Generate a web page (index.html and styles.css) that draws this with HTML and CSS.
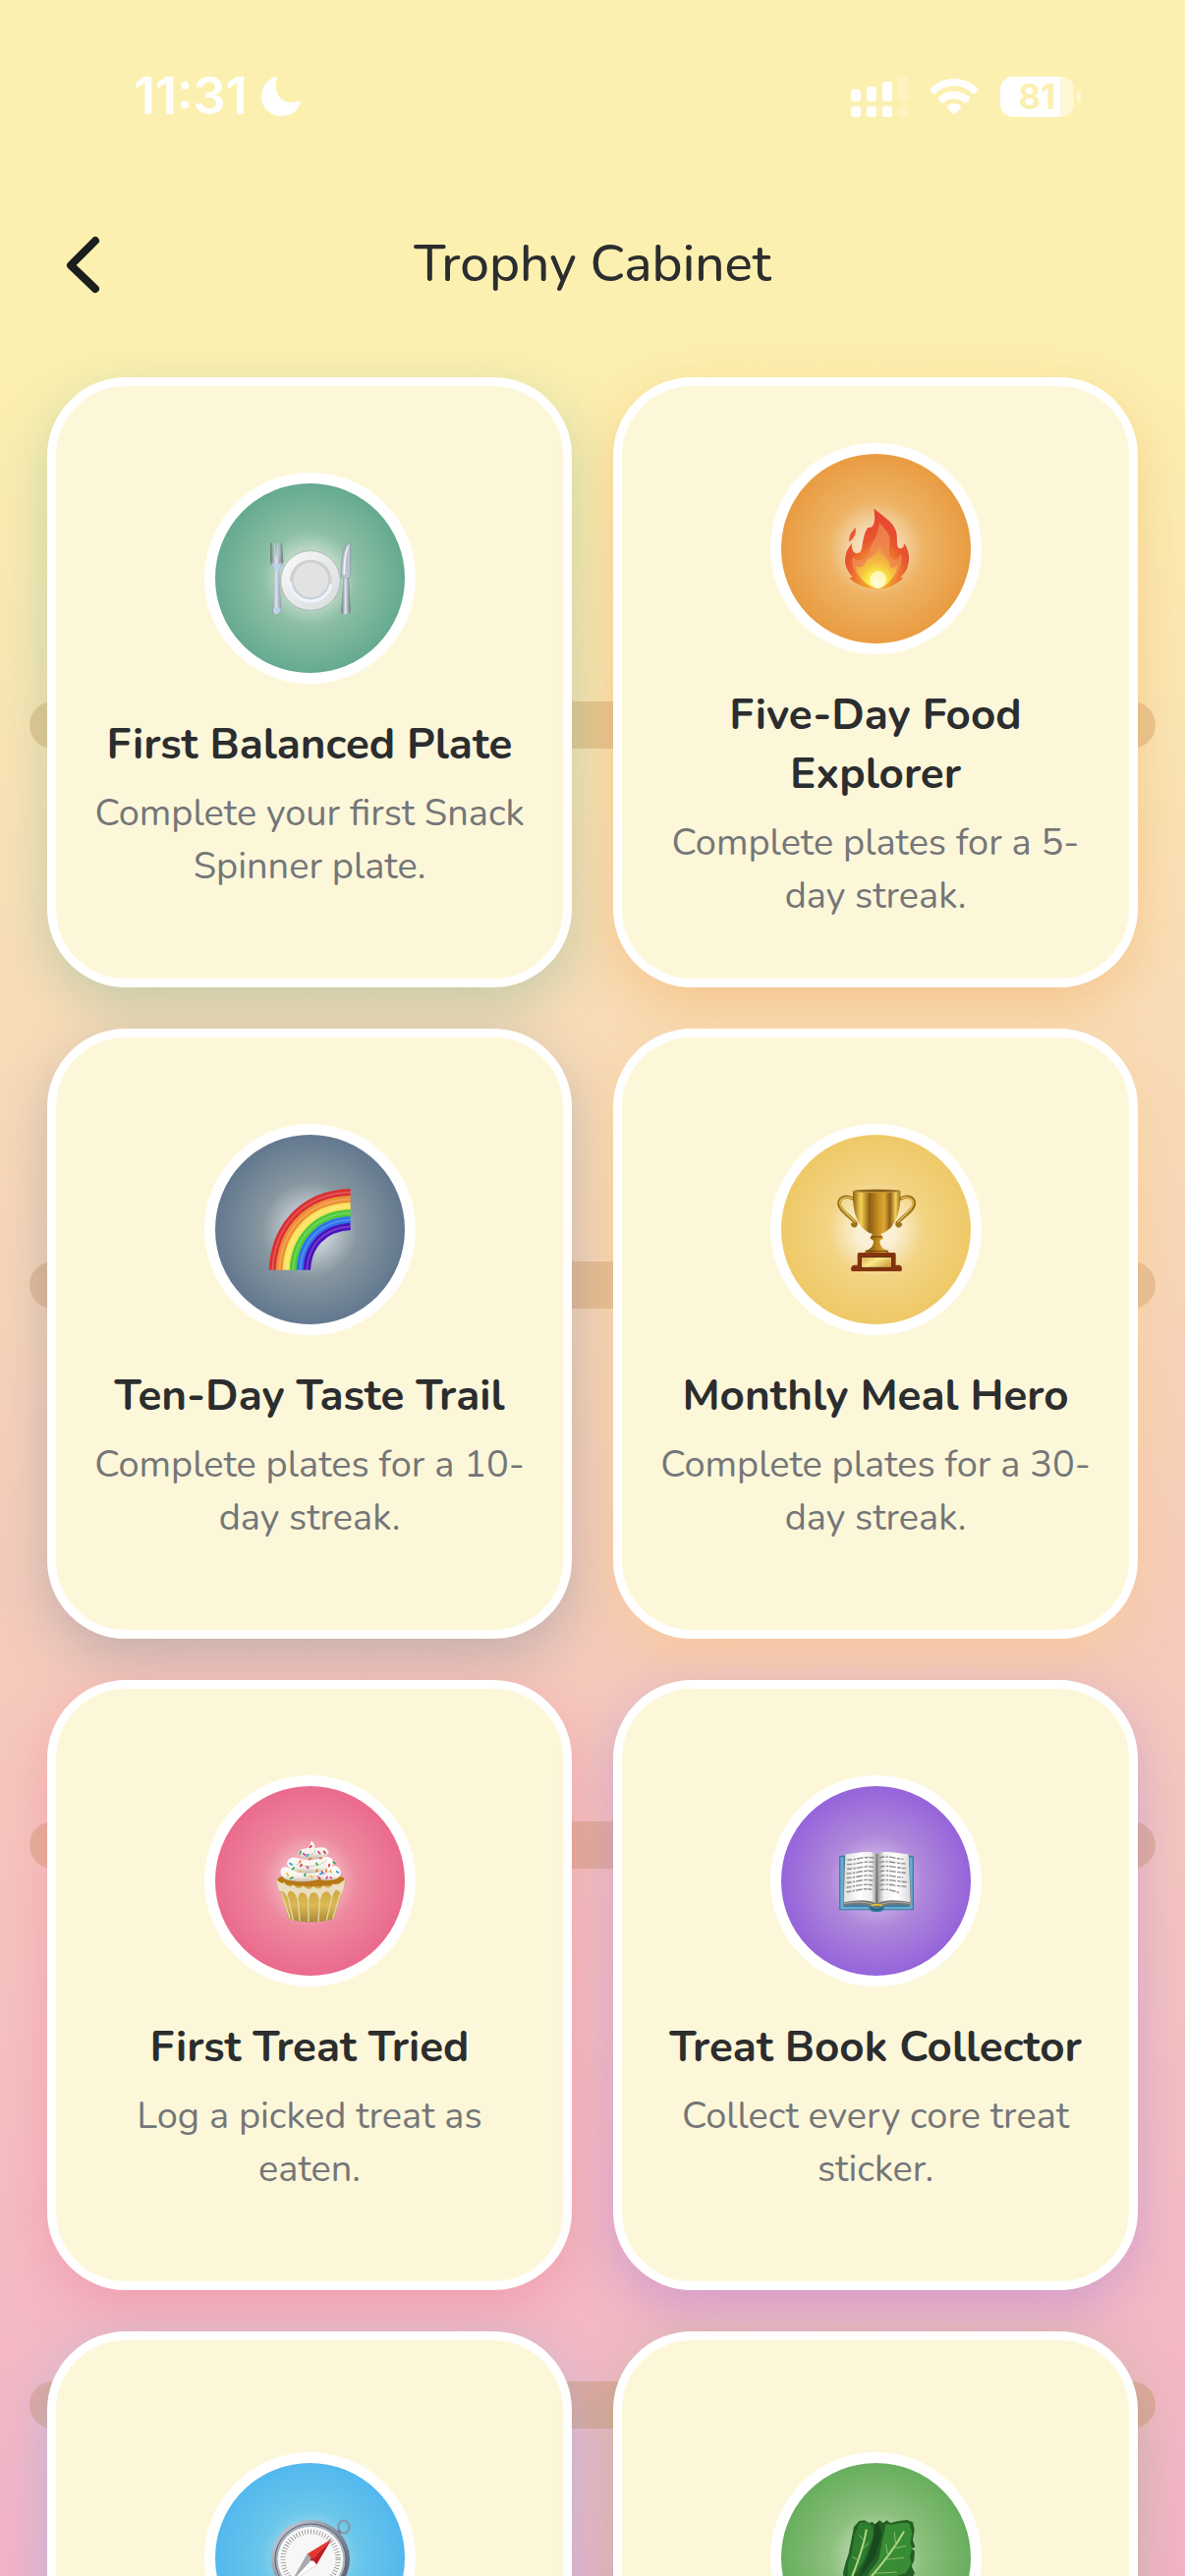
FILE: index.html
```html
<!DOCTYPE html>
<html lang="en">
<head>
  <meta charset="UTF-8">
  <meta name="viewport" content="width=device-width, initial-scale=1.0">
  <title>Trophy Cabinet</title>
  <link rel="stylesheet" href="styles.css">
</head>
<body>
  <div class="screen">
    <div class="shelves" aria-hidden="true">
      <span class="shelf"></span>
      <span class="shelf"></span>
      <span class="shelf"></span>
      <span class="shelf"></span>
    </div>

    <div class="status">
      <div class="status_left">
        <span class="time">11:31</span>
        <svg class="moon" viewBox="0 0 120 120"><path fill="#fff" d="M41 1C45-1 49 3 47 7C40 34 46 56 62 69C76 80 94 82 111 76C117 74 121 77 119 82C111 105 89 120 62 120C27 120 0 94 0 60C0 33 16 11 41 1Z"/></svg>
      </div>
      <div class="status_right">
        <svg class="signal" viewBox="0 0 58 41" fill="#fff">
          <rect x="0" y="13" width="10" height="12" rx="3"/>
          <rect x="16" y="10" width="10" height="15" rx="3"/>
          <rect x="32" y="5" width="10" height="20" rx="3"/>
          <rect x="48" y="0" width="10" height="25" rx="3" opacity=".2"/>
          <rect x="0" y="30" width="10" height="11" rx="3"/>
          <rect x="16" y="30" width="10" height="11" rx="3"/>
          <rect x="32" y="30" width="10" height="11" rx="3"/>
          <rect x="48" y="30" width="10" height="11" rx="3" opacity=".2"/>
        </svg>
        <svg class="wifi" viewBox="0 0 150 112" fill="#fff">
          <path d="M2 31C42-10 108-10 148 31Q151 34 148 37L138 47Q135 49 132 46C100 15 50 15 18 46Q15 49 12 47L2 37Q-1 34 2 31Z"/>
          <path d="M28 57C55 32 95 32 122 57Q126 61 122 64L113 74Q109 77 106 74C88 58 62 58 44 74Q41 77 37 74L28 64Q24 61 28 57Z"/>
          <path d="M54 84C66 74 84 74 96 84Q99 87 96 90L78 109Q75 112 72 109L54 90Q51 87 54 84Z"/>
        </svg>
        <div class="battery"><span class="battery_level">81</span></div>
      </div>
    </div>

    <header class="header">
      <button class="back" type="button" aria-label="Back">
        <svg viewBox="0 0 40 60"><path d="M33 6L8 31L33 55" fill="none" stroke="#1c1e1d" stroke-width="8" stroke-linecap="round" stroke-linejoin="round"/></svg>
      </button>
      <h1 class="header_title">Trophy Cabinet</h1>
    </header>

    <main class="trophies">
      <article class="card green">
        <div class="medal">
          <svg viewBox="0 0 252 252">
            <defs>
              <linearGradient id="steel" x1="0" x2="1"><stop offset="0" stop-color="#66716f"/><stop offset=".45" stop-color="#dce5f2"/><stop offset="1" stop-color="#6b7478"/></linearGradient>
              <linearGradient id="dish" x2="1" y2="1"><stop offset="0" stop-color="#fafafa"/><stop offset="1" stop-color="#d8dadb"/></linearGradient>
            </defs>
            <path fill="url(#steel)" d="M7 20L12 20L14 62L17 62L17 20L21 20L23 62L26 62L28 20L32 20L34 62L37 62L37 20L42 20L46 75C46 85 37 90 33 98L40 228Q40 236 33 236H18Q11 236 12 228L21 98C17 90 6 87 6 76Z"/>
            <path fill="#bcd2f5" d="M9 78C17 88 36 88 43 78L31 104H22ZM15 220H38V231H15Z"/>
            <circle cx="129" cy="135" r="91" fill="url(#dish)" stroke="#9aa5a1" stroke-width="2"/>
            <circle cx="130" cy="135" r="64" fill="#cdd0d3"/>
            <path d="M67 139A63 63 0 0 0 192 145" fill="none" stroke="#edf4ff" stroke-width="9"/>
            <circle cx="130" cy="133" r="53" fill="#e2e2e2"/>
            <path fill="#bac4d0" stroke="#7c8e91" stroke-width="2" d="M251 20V122Q250 129 242 129H231Q223 127 223 117C222 78 229 18 251 20Z"/>
            <path fill="#f2f5fa" d="M248 24C234 36 230 76 229 116H235C234 80 239 42 248 24Z"/>
            <path fill="url(#steel)" d="M229 128H246L251 226Q251 237 242 237H231Q223 236 223 227Z"/>
          </svg>
        </div>
        <h2 class="card_title">First Balanced Plate</h2>
        <p class="card_text">Complete your first Snack Spinner plate.</p>
      </article>

      <article class="card orange">
        <div class="medal">
          <svg viewBox="0 0 252 252">
            <defs>
              <radialGradient id="flame" cx=".5" cy=".85" r=".8"><stop offset="0" stop-color="#fdd835"/><stop offset=".3" stop-color="#f0922e"/><stop offset=".6" stop-color="#e8552e"/><stop offset="1" stop-color="#e5452f"/></radialGradient>
              <radialGradient id="ember" cx=".5" cy=".85" r=".75"><stop offset="0" stop-color="#fffde0"/><stop offset=".25" stop-color="#fdf04a"/><stop offset=".6" stop-color="#f6bd40"/><stop offset="1" stop-color="#f09a48"/></radialGradient>
            </defs>
            <path fill="#ea5a39" d="M65 62C58 72 46 78 45 106C61 96 68 84 65 62Z"/>
            <path fill="url(#flame)" d="M122 5C150 30 182 45 190 78C194 100 188 125 200 127C210 128 214 118 214 110C226 130 232 150 226 175C222 195 212 205 203 215L211 217C190 238 160 250 134 251C100 250 66 238 46 217L56 215C40 195 28 175 35 148C38 130 48 120 54 110C52 125 56 141 70 142C84 140 84 128 86 115C90 90 94 75 103 63C112 64 120 60 122 45C126 30 121 18 122 5Z"/>
            <path fill="#f08f56" opacity=".75" d="M138 48C152 66 170 78 170 104C169 132 162 152 180 160C192 164 201 152 203 141C213 174 197 222 134 250C78 232 48 190 57 151C72 172 98 164 105 138C112 112 136 88 138 48Z"/>
            <path fill="url(#ember)" d="M139 118C140 146 172 160 170 184C178 190 190 184 194 175C192 208 164 242 134 250C98 242 66 210 66 180C76 188 92 182 96 168C112 150 136 142 139 118Z"/>
            <ellipse cx="134" cy="222" rx="25" ry="27" fill="#fffce4" opacity=".7"/>
          </svg>
        </div>
        <h2 class="card_title">Five-Day Food Explorer</h2>
        <p class="card_text">Complete plates for a 5-day streak.</p>
      </article>

      <article class="card slate">
        <div class="medal">
          <svg viewBox="0 0 252 252" fill="none">
            <g stroke-width="22">
              <path stroke="#dd2f30" d="M13 251C18 120 105 18 251 14"/>
              <path stroke="#ee8f33" d="M34 251C39 132 118 39 251 35"/>
              <path stroke="#fbe35c" d="M55 251C60 143 130 60 251 56"/>
              <path stroke="#4ecb38" d="M76 251C81 155 143 81 251 77"/>
              <path stroke="#2c74ec" d="M97 251C102 166 155 102 251 98"/>
              <path stroke="#4b12bd" d="M118 251C121 178 167 123 251 118"/>
            </g>
            <g stroke="#fff" stroke-width="5" opacity=".2">
              <path d="M13 251C18 120 105 18 251 14"/>
              <path d="M34 251C39 132 118 39 251 35"/>
              <path d="M55 251C60 143 130 60 251 56"/>
              <path d="M76 251C81 155 143 81 251 77"/>
              <path d="M97 251C102 166 155 102 251 98"/>
              <path d="M118 251C121 178 167 123 251 118"/>
            </g>
          </svg>
        </div>
        <h2 class="card_title">Ten-Day Taste Trail</h2>
        <p class="card_text">Complete plates for a 10-day streak.</p>
      </article>

      <article class="card gold">
        <div class="medal">
          <svg viewBox="0 0 252 252">
            <defs>
              <linearGradient id="cup" x2="1"><stop offset="0" stop-color="#8c6010"/><stop offset=".17" stop-color="#f7d355"/><stop offset=".35" stop-color="#8d5d14"/><stop offset=".52" stop-color="#c18a20"/><stop offset=".66" stop-color="#dda934"/><stop offset=".78" stop-color="#8d5d14"/><stop offset=".9" stop-color="#f2cf58"/><stop offset="1" stop-color="#986b14"/></linearGradient>
              <linearGradient id="plaque" x2="1" y2=".6"><stop offset="0" stop-color="#d8a84a"/><stop offset=".5" stop-color="#f9e98a"/><stop offset="1" stop-color="#d6a445"/></linearGradient>
            </defs>
            <g fill="none" stroke-linecap="round">
              <path stroke="#9e741b" stroke-width="11" d="M57 33C42 24 17 26 15 47C14 68 47 86 65 107C68 116 60 119 56 112M203 33C218 24 243 26 244 47C245 68 210 86 193 107C190 116 198 119 202 112"/>
              <path stroke="#e8c456" stroke-width="4" d="M55 32C42 26 18 29 17 47C18 66 46 84 64 104M205 32C218 26 240 29 241 47C240 66 213 84 195 104"/>
            </g>
            <path fill="url(#cup)" d="M57 10C55 88 78 128 117 141L109 154L120 162C120 176 113 188 94 192L91 202H168L165 192C147 188 139 176 139 162L150 154L142 141C181 128 204 88 202 10Z"/>
            <ellipse cx="130" cy="10" rx="74" ry="6" fill="#c09336"/>
            <ellipse cx="130" cy="9" rx="68" ry="2" fill="#704c10"/>
            <path d="M112 150H147M96 193H164" stroke="#6d430c" stroke-width="3"/>
            <path fill="#85340f" d="M76 198H184Q188 198 188 204V236H200Q207 238 207 249Q207 255 201 255H57Q51 255 51 249Q51 238 60 236H71V204Q71 198 76 198Z"/>
            <path fill="url(#plaque)" stroke="#5c210b" stroke-width="3" d="M82 211H176V244H82Z"/>
          </svg>
        </div>
        <h2 class="card_title">Monthly Meal Hero</h2>
        <p class="card_text">Complete plates for a 30-day streak.</p>
      </article>

      <article class="card pink">
        <div class="medal">
          <svg viewBox="0 0 252 252">
            <defs>
              <linearGradient id="wrap" y2="1" x2="0"><stop offset="0" stop-color="#c99c3c"/><stop offset=".6" stop-color="#dcb952"/><stop offset="1" stop-color="#a98b38"/></linearGradient>
              <linearGradient id="cream" y2="1" x2="0"><stop offset="0" stop-color="#fff"/><stop offset=".65" stop-color="#f5f2ea"/><stop offset="1" stop-color="#c5bba9"/></linearGradient>
            </defs>
            <path fill="url(#wrap)" d="M25 125L61 243Q125 264 201 243L236 125Z"/>
            <ellipse cx="131" cy="124" rx="103" ry="20" fill="#b87818"/>
            <path fill="#e9dfc0" d="M24 122C34 132 42 137 49 132C57 146 70 148 77 139C86 153 98 153 107 142C117 155 129 155 138 143C148 154 160 154 169 141C179 152 191 149 198 136C208 142 221 136 236 120L229 152L222 172C220 160 212 153 206 156C200 160 196 172 194 184C192 168 184 158 176 160C166 162 160 178 157 192C155 174 147 162 138 163C128 164 124 178 122 194C120 178 114 164 104 163C94 163 91 176 91 190C86 172 78 158 68 158C61 158 58 168 59 182C54 168 46 156 38 160L33 156Z"/>
            <path fill="none" stroke="#e3d7ac" stroke-width="4" d="M40 162L66 243M60 176L76 247M91 184L96 250M122 188L123 252M157 186L153 251M194 178L178 248M220 166L197 243"/>
            <path fill="url(#cream)" d="M40 90C50 79 70 92 95 100C140 111 168 86 205 82C224 88 223 104 219 112C211 128 174 128 155 122C116 134 76 130 56 124C40 116 34 101 40 90Z"/>
            <path fill="url(#cream)" d="M61 64C74 48 93 62 119 64C146 68 166 46 190 57C207 70 199 83 180 92C152 105 110 108 82 98C61 90 52 76 61 64Z"/>
            <path fill="url(#cream)" d="M94 38C101 25 119 34 124 22C132 20 126 10 132 7C145 15 139 22 144 28C162 22 178 24 184 38C185 52 157 64 126 60C101 57 87 48 94 38Z"/>
            <path fill="none" stroke="#cfc8bb" stroke-width="3" d="M112 47C128 51 146 44 143 31M85 76C119 90 162 82 178 64M112 112C145 118 178 108 194 92"/>
            <g stroke-width="5" stroke-linecap="round">
              <path stroke="#d82f3d" d="M127 25L132 21M170 37L174 43M99 83L102 77M153 117L158 120M185 82L187 77"/>
              <path stroke="#31a34a" d="M97 45L99 37M74 92L79 87M68 120L75 117M111 112L113 106M147 73L150 79M198 70L204 74"/>
              <path stroke="#dc3990" d="M107 44L112 48M118 84L122 88M153 38L158 44M164 99L168 104M178 121L180 115M190 117L193 119"/>
              <path stroke="#ee6c24" d="M95 72L98 66M157 59L163 58M125 62L130 59M147 99L150 94M176 99L178 94"/>
              <path stroke="#269bdf" d="M66 74L73 78M118 52L121 47M159 106L165 103M209 99L214 102"/>
              <path stroke="#eabf2c" d="M57 105L61 111M130 112L134 117M94 99L99 98M189 97L193 101"/>
            </g>
          </svg>
        </div>
        <h2 class="card_title">First Treat Tried</h2>
        <p class="card_text">Log a picked treat as eaten.</p>
      </article>

      <article class="card purple">
        <div class="medal">
          <svg viewBox="0 0 252 252">
            <defs>
              <linearGradient id="leafl" x2="1"><stop offset="0" stop-color="#dedede"/><stop offset=".5" stop-color="#fff"/><stop offset=".85" stop-color="#eee"/><stop offset="1" stop-color="#999"/></linearGradient>
              <linearGradient id="leafr" x2="1"><stop offset="0" stop-color="#999"/><stop offset=".2" stop-color="#f2f2f2"/><stop offset=".6" stop-color="#fff"/><stop offset="1" stop-color="#d8d8dc"/></linearGradient>
            </defs>
            <path fill="#397fa6" d="M15 53L20 50H238L243 53V217H151C144 225 115 225 108 217H15Z"/>
            <path fill="#68acd0" d="M19 55H29V207H106V214H19ZM229 55H239V214H151V207H229Z"/>
            <path fill="#777773" d="M33 45L27 190L30 204C60 198 103 198 119 209H140C157 198 204 198 232 204L235 190L228 45Z"/>
            <path fill="none" stroke="#c6c5be" stroke-width="2" d="M30 197C65 190 106 191 122 202M138 202C154 191 203 190 232 197"/>
            <path fill="url(#leafl)" d="M34 46C70 43 109 32 129 45L126 196C104 182 63 187 29 193Z"/>
            <path fill="url(#leafr)" d="M132 45C151 32 192 43 227 46L233 193C199 187 157 182 134 196Z"/>
            <path fill="#e9c42b" d="M110 205C116 195 144 195 150 205C139 202 122 202 110 205Z"/>
            <path fill="none" stroke="#246180" stroke-width="5" d="M111 207C119 219 143 219 150 207"/>
            <g fill="none" stroke="#8a8a8a" stroke-width="4" stroke-dasharray="15 4 7 3 20 4 11 3">
              <path d="M40 63C69 64 92 51 121 57M39 77C68 78 91 65 120 71M39 91C68 91 91 80 120 85M38 105C66 105 89 93 119 98M38 119C63 118 89 107 117 112M38 133C62 132 89 120 118 126M38 147C62 145 86 135 117 140M37 161C62 159 86 148 116 154"/>
              <path d="M139 57C161 49 182 59 211 61M139 71C159 64 182 73 217 75M140 85C162 78 183 87 218 89M140 99C162 92 184 101 219 103M140 113C161 106 181 115 210 117M140 127C162 120 184 129 222 131M139 141C163 134 183 143 221 145M139 155C164 150 180 158 198 163"/>
            </g>
          </svg>
        </div>
        <h2 class="card_title">Treat Book Collector</h2>
        <p class="card_text">Collect every core treat sticker.</p>
      </article>

      <article class="card blue medal_only">
        <div class="medal">
          <svg viewBox="0 0 252 252">
            <defs>
              <linearGradient id="rim" x2="1" y2="1"><stop offset="0" stop-color="#d2d6df"/><stop offset=".5" stop-color="#848c9b"/><stop offset="1" stop-color="#4e5667"/></linearGradient>
            </defs>
            <ellipse cx="231" cy="30" rx="17" ry="19" fill="none" stroke="#8499ab" stroke-width="7"/>
            <path d="M207 54L219 43" stroke="#6a7687" stroke-width="13"/>
            <circle cx="129" cy="129" r="120" fill="url(#rim)"/>
            <circle cx="129" cy="129" r="108" fill="#a9afba" stroke="#596172" stroke-width="3"/>
            <circle cx="129" cy="129" r="100" fill="#f7f7f7"/>
            <circle cx="129" cy="129" r="84" fill="none" stroke="#777" stroke-width="15" stroke-dasharray="2 7"/>
            <path fill="#a8aaae" stroke="#797d83" stroke-width="1" d="M120 112L148 145L72 197Z"/>
            <path fill="#fff" d="M134 129L148 145L72 197Z"/>
            <path fill="#e53730" d="M194 67L120 112L134 129Z"/>
            <path fill="#bd1e23" d="M194 67L134 129L148 145Z"/>
            <circle cx="134" cy="129" r="5" fill="#b4252a"/>
          </svg>
        </div>
      </article>

      <article class="card leaf medal_only">
        <div class="medal">
          <svg viewBox="0 0 252 252">
            <path fill="#235f24" d="M76 12L92 10L108 18L116 14L124 22L138 10L150 18L160 10L172 18L196 12L222 9L240 16L245 38L240 70L247 92L236 96L246 104L244 132L236 150L246 171L232 196L200 213L164 206L130 222L76 247L28 252L22 225L30 197L27 170L34 142L44 112L54 61L60 30Z"/>
            <path fill="#2f7d2e" d="M78 18L101 15L118 27L120 62L107 91L91 132L60 181L40 208L42 142L54 110L62 55Z"/>
            <path fill="#388c35" d="M158 20L176 24L198 18L229 18L238 49L232 78L238 94L231 122L236 143L219 170L188 181L160 200L105 216L79 220L112 162L136 130L146 78Z"/>
            <path fill="#174b1e" d="M125 24L136 16L145 54L134 88L128 115L107 147L72 192L89 148L105 114L115 82Z"/>
            <g fill="none" stroke="#8fbd66" stroke-width="3" stroke-linecap="round">
              <path stroke="#b4d884" stroke-width="6" d="M212 46C184 95 151 142 83 216M98 40C90 90 68 152 36 226"/>
              <path d="M188 86L184 48M182 96L218 88M164 120L158 84M158 130L212 124M124 172L190 168M90 70L76 56M86 98L104 80M74 132L56 122"/>
            </g>
          </svg>
        </div>
      </article>
    </main>
  </div>
</body>
</html>
```

FILE: styles.css
```css
*,*:before,*:after{
  box-sizing: border-box;
  margin: 0;
  padding: 0;
}

body{
  font-family: "Nunito", "Open Sans", sans-serif;
  color: #2b2d2e;
}
svg{
  display: block;
}
.screen{
  position: relative;
  height: 100vh;
  overflow-x: hidden;
  overflow-y: auto;
  scrollbar-width: none;
  background: linear-gradient(#fcf0b0 0%, #fcf0b0 14%, #f9dfb7 36%, #f6cdbb 60%, #f4bdc3 86%, #f4b2c8 100%);
}

/* wooden shelves behind the cards */
.shelves{
  position: absolute;
  top: 0;
  left: 0;
  right: 0;
  display: flex;
  flex-direction: column;
  gap: 522px;
  padding: 714px 30px 0;
}
.shelf{
  height: 48px;
  border-radius: 24px;
  background: rgba(184, 128, 70, 0.3);
}

/* status bar */
.status{
  display: flex;
  justify-content: space-between;
  align-items: center;
  height: 196px;
  padding: 0 106px 0 136px;
  color: #fff;
}
.status_left,
.status_right{
  display: flex;
  align-items: center;
}
.status_left{
  gap: 14px;
}
.status_right{
  gap: 22px;
}
.time{
  font-family: "Inter", sans-serif;
  font-size: 52px;
  font-weight: 600;
  line-height: 60px;
}
.moon{
  width: 40px;
  height: 40px;
}
.signal{
  width: 58px;
  height: 41px;
}
.wifi{
  width: 50px;
  height: 37px;
}
.battery{
  position: relative;
  width: 75px;
  height: 41px;
  margin-right: 7px;
  border-radius: 13px;
  background: linear-gradient(90deg, #fff 81%, rgba(255, 255, 255, 0.5) 81%);
  text-align: center;
}
.battery:after{
  content: '';
  position: absolute;
  left: 78px;
  top: 14px;
  width: 4px;
  height: 13px;
  border-radius: 0 4px 4px 0;
  background: rgba(255, 255, 255, 0.5);
}
.battery_level{
  display: block;
  color: #fcf0b0;
  font-family: "Inter", sans-serif;
  font-size: 35px;
  font-weight: 700;
  line-height: 41px;
}

/* header */
.header{
  display: grid;
  grid-template-columns: 84px 1fr 84px;
  align-items: center;
  height: 146px;
  padding: 0 42px;
}
.back{
  display: flex;
  align-items: center;
  justify-content: center;
  height: 84px;
  border: none;
  background: none;
  cursor: pointer;
}
.back svg{
  width: 40px;
  height: 60px;
}
.header_title{
  font-size: 53px;
  font-weight: 500;
  line-height: 72px;
  text-align: center;
}

/* trophy cards */
.trophies{
  position: relative;
  display: grid;
  grid-template-columns: 1fr 1fr;
  gap: 42px;
  padding: 42px 48px;
}
.card{
  display: flex;
  flex-direction: column;
  align-items: center;
  justify-content: center;
  min-height: 621px;
  padding: 24px 30px;
  border: 9px solid #fff;
  border-radius: 80px;
  background: #fdf7da;
  box-shadow: 0 18px 54px var(--glow);
  text-align: center;
}
.medal_only{
  justify-content: flex-start;
  padding-top: 114px;
}
.medal{
  display: flex;
  align-items: center;
  justify-content: center;
  width: 215px;
  height: 215px;
  margin-bottom: 32px;
  border: 11px solid #fff;
  border-radius: 50%;
  background: radial-gradient(circle closest-side, var(--light) 0%, var(--light) 20%, var(--mid) 50%, var(--edge) 100%);
}
.medal svg{
  width: 84px;
  height: 84px;
  overflow: visible;
}
.card_title{
  margin-bottom: 13px;
  font-size: 44px;
  font-weight: 700;
  line-height: 60px;
}
.card_text{
  color: #747678;
  font-size: 38px;
  line-height: 54px;
}

.green{
  --light: #d3e4d8;
  --mid: #8cbfa4;
  --edge: #65aa90;
  --glow: rgba(101, 170, 144, 0.35);
}
.orange{
  --light: #f5ddb8;
  --mid: #eeb364;
  --edge: #e99c41;
  --glow: rgba(240, 156, 65, 0.35);
}
.slate{
  --light: #c6ced5;
  --mid: #8797a0;
  --edge: #63788f;
  --glow: rgba(99, 120, 143, 0.35);
}
.gold{
  --light: #faf0d6;
  --mid: #f3d484;
  --edge: #efc967;
  --glow: rgba(248, 201, 103, 0.35);
}
.pink{
  --light: #f2bfc8;
  --mid: #ee889e;
  --edge: #ea6a8d;
  --glow: rgba(234, 106, 141, 0.35);
}
.purple{
  --light: #cdb6e8;
  --mid: #ae87da;
  --edge: #9564da;
  --glow: rgba(149, 100, 218, 0.35);
}
.blue{
  --light: #abdcf0;
  --mid: #6bc7ea;
  --edge: #52b8ee;
  --glow: rgba(82, 184, 238, 0.35);
}
.leaf{
  --light: #bbdab0;
  --mid: #8abf7b;
  --edge: #68ae5e;
  --glow: rgba(104, 174, 94, 0.35);
}
```
